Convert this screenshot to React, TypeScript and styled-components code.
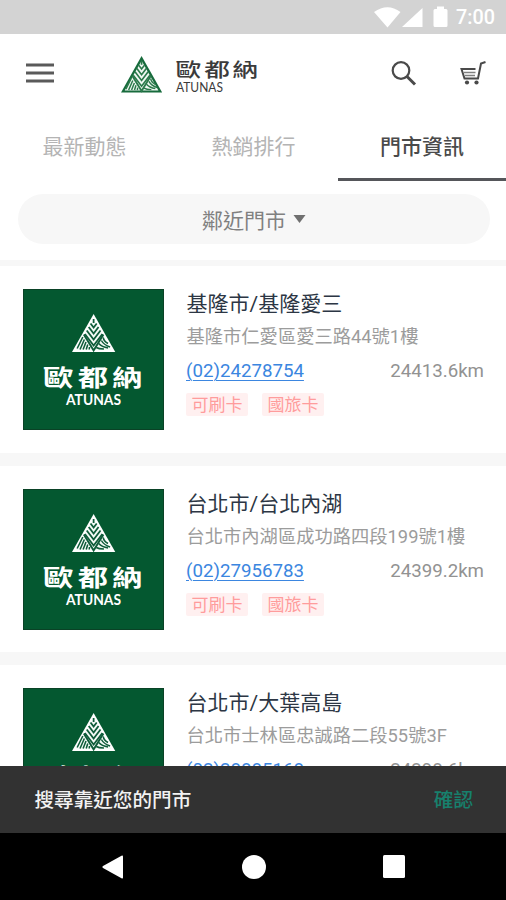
import React from 'react';
import styled, { createGlobalStyle } from 'styled-components';

const GlobalStyle = createGlobalStyle`
  * { box-sizing: border-box; }
  body { margin: 0; background: #fff; font-family: Roboto, "Noto Sans CJK TC", sans-serif; }
  button { border: 0; padding: 0; background: none; font: inherit; color: inherit; }
  svg { display: block; flex: none; }
`;

const Screen = styled.div`
  width: 506px;
  height: 900px;
  display: flex;
  flex-direction: column;
  overflow: hidden;
  background: #fff;
`;

const StatusBar = styled.div`
  height: 34px;
  flex: none;
  display: flex;
  align-items: center;
  justify-content: flex-end;
  padding-right: 11px;
  background: #d3d3d3;
  color: #fff;
`;

const Clock = styled.span`
  margin-left: 8px;
  width: 39px;
  font-size: 19.8px;
  font-weight: 500;
  line-height: 34px;
  padding-top: 2px;
  white-space: nowrap;
`;

const Header = styled.header`
  height: 78px;
  flex: none;
  display: flex;
  align-items: center;
  padding: 0 19px 0 25px;
`;

const IconButton = styled.button<{ $gap?: number }>`
  display: flex;
  margin-left: ${(p) => p.$gap ?? 0}px;
`;

const LogoBox = styled.div`
  flex: 1;
  padding: 1px 0 0 62px;
`;

const Tabs = styled.nav`
  height: 69px;
  flex: none;
  display: grid;
  grid-template-columns: 169px 169px 168px;
`;

const Tab = styled.button<{ $active?: boolean }>`
  height: 69px;
  padding-top: 5px;
  border-bottom: 3px solid ${(p) => (p.$active ? '#55565a' : 'transparent')};
  color: ${(p) => (p.$active ? '#4a4a4a' : '#b4b4b4')};
  font-size: 21px;
  font-weight: ${(p) => (p.$active ? 500 : 400)};
  line-height: 61px;
`;

const FilterBar = styled.div`
  height: 79px;
  flex: none;
  padding: 13px 16px 0 18px;
`;

const FilterPill = styled.button`
  width: 100%;
  height: 50px;
  border-radius: 25px;
  background: #f7f7f7;
  color: #808080;
  font-size: 21px;
  display: flex;
  align-items: center;
  justify-content: center;
  gap: 7px;
`;

const List = styled.main`
  flex: 1;
  min-height: 0;
  overflow: hidden;
  border-top: 6px solid #f7f7f7;
`;

const Card = styled.article`
  height: 199.5px;
  display: flex;
  padding: 23px 22px 0 23px;
  border-bottom: 13.5px solid #f7f7f7;
`;

const Thumb = styled.div`
  width: 141px;
  height: 141px;
  flex: none;
  background: #045830;
  border: 1px solid #0a4226;
`;

const Info = styled.div`
  flex: 1;
  min-width: 0;
  padding-left: 22.5px;
`;

const Name = styled.h2`
  margin: 0;
  font-size: 21px;
  font-weight: 400;
  line-height: 30px;
  color: #2c3644;
  white-space: nowrap;
`;

const Address = styled.p`
  margin: 0;
  padding-top: 2px;
  font-size: 18.3px;
  line-height: 32px;
  color: #9c9c9c;
  white-space: nowrap;
`;

const ContactRow = styled.div`
  display: flex;
  justify-content: space-between;
  padding-top: 1px;
  font-size: 18.7px;
  line-height: 34px;
  color: #929292;
`;

const Phone = styled.a`
  margin-left: -0.5px;
  color: #3b86e0;
  text-decoration: underline;
  text-decoration-thickness: 1px;
  text-underline-offset: 3px;
`;

const TagRow = styled.div`
  display: flex;
  gap: 14px;
  padding-top: 5px;
  margin-left: -0.5px;
`;

const Tag = styled.span`
  width: 62px;
  height: 23px;
  border-radius: 2px;
  background: #fff0f0;
  color: #ff9c9c;
  font-size: 17px;
  line-height: 25px;
  text-align: center;
`;

const Snackbar = styled.div`
  height: 67px;
  flex: none;
  display: flex;
  align-items: center;
  justify-content: space-between;
  padding: 0 33px 2px 34.5px;
  background: #323232;
  color: #f2f2f2;
  font-size: 19.6px;
  font-weight: 500;
`;

const Confirm = styled.button`
  color: #17806d;
`;

const NavBar = styled.div`
  height: 67px;
  flex: none;
  display: flex;
  align-items: center;
  justify-content: space-between;
  padding: 0 101px;
  background: #000;
`;

/* Striped mountain mark, drawn in a 42 x 38 box. */
const Mark = ({ frame, field, line }: { frame: string; field: string; line: string }) => (
  <>
    <path d="M21 0 42 38H0Z" fill={frame} />
    <path d="M21 5 38.200 36H3.800Z" fill={field} />
    <g stroke={line} fill="none" strokeWidth="1.700">
      <path d="M11.500 20.500 21 36.500 30.500 20.500" strokeWidth="1.900" />
      <path d="M21 5v4M18 9.500 21 13.500 24 9.500M16.200 13 21 19.500 25.800 13M14.300 16.500 21 25.500 27.700 16.500M12.500 20 21 31.500 29.500 20" />
      <path d="M10.500 23 5 34.500M12 25.500 7.800 35.500M13.600 28 10.800 35.500M15.300 30.500 13.800 35.500M17 33 16.700 35.500" strokeWidth="1.500" />
      <path d="M30.300 23.500Q31 27.500 35 29.500M28.500 26.500Q31 31 37 33M26 29.500Q29 33 35 34M23.500 33.500Q26 35 31 35" strokeWidth="1.500" />
    </g>
  </>
);

const cjk = '"Noto Sans CJK TC", sans-serif';

const HeaderLogo = () => (
  <svg width="142" height="42" viewBox="0 0 142 42">
    <g transform="translate(5 3) scale(.98 .96)">
      <Mark frame="#176b3c" field="#f1f8f3" line="#2b7a4b" />
    </g>
    <g fill="#3b3b3b">
      <text transform="translate(59.500 23.500) scale(1.220 .92)" x="0 23.500 46.800" y="0" fontFamily={cjk} fontSize="21" fontWeight="500">歐都納</text>
      <text x="60" y="38.500" fontFamily="Lato, sans-serif" fontSize="12.500" textLength="47" lengthAdjust="spacingAndGlyphs">ATUNAS</text>
    </g>
  </svg>
);

const ThumbLogo = () => (
  <svg width="139" height="139" viewBox="1 1 139 139">
    <g transform="translate(49 25) scale(1.030 1)">
      <Mark frame="#fff" field="#f4faf6" line="#0f5c3a" />
    </g>
    <g fill="#fff">
      <text transform="translate(20 97) scale(1.260 .97)" x="0 27.500 55" y="0" fontFamily={cjk} fontSize="24" fontWeight="700">歐都納</text>
      <text x="43" y="115.500" fontFamily="Lato, sans-serif" fontSize="15.500" fontWeight="700" textLength="55" lengthAdjust="spacingAndGlyphs">ATUNAS</text>
    </g>
  </svg>
);

const stores = [
  { name: '基隆市/基隆愛三', address: '基隆市仁愛區愛三路44號1樓', phone: '(02)24278754', distance: '24413.6km' },
  { name: '台北市/台北內湖', address: '台北市內湖區成功路四段199號1樓', phone: '(02)27956783', distance: '24399.2km' },
  { name: '台北市/大葉高島', address: '台北市士林區忠誠路二段55號3F', phone: '(02)28885168', distance: '24398.6km' },
];

export default function App() {
  return (
    <Screen>
      <GlobalStyle />
      <StatusBar>
        <svg width="74" height="34" viewBox="374 0 74 34" fill="#fff">
          <path d="M374 12Q387.500 2.500 400.500 12L387.500 27.500Z" />
          <path d="M422.500 8V27H402Z" />
          <path d="M437 6.500h7V9h2q1.500 0 1.500 1.500v15q0 1.500-1.500 1.500h-11q-1.500 0-1.500-1.500v-15Q433.500 9 435 9h2Z" />
        </svg>
        <Clock>7:00</Clock>
      </StatusBar>
      <Header>
        <IconButton aria-label="menu">
          <svg width="29" height="24" viewBox="0 0 29 24" stroke="#5a5a5a" strokeWidth="2.800">
            <path d="M1 4h28M1 12h28M1 20h28" />
          </svg>
        </IconButton>
        <LogoBox><HeaderLogo /></LogoBox>
        <IconButton aria-label="search">
          <svg width="26" height="26" viewBox="0 0 26 26" fill="none" stroke="#4a4a4a">
            <circle cx="10" cy="10.500" r="8.300" strokeWidth="2.200" />
            <path d="M16 16.500 24 24.500" strokeWidth="3" />
          </svg>
        </IconButton>
        <IconButton aria-label="cart" $gap={42}>
          <svg width="28" height="26" viewBox="0 0 28 26" fill="none" stroke="#4a4a4a" strokeWidth="2">
            <path d="M26.500 2 22 3.500 19 18.500H5.500L2.500 9H16.500" />
            <path d="M5 12.500h11.500M6 15.500h10" strokeWidth="1.400" stroke="#808080" />
            <g fill="#4a4a4a" stroke="none"><circle cx="8" cy="22.500" r="2.100" /><circle cx="17.500" cy="22.500" r="2.100" /></g>
          </svg>
        </IconButton>
      </Header>
      <Tabs>
        <Tab>最新動態</Tab>
        <Tab>熱銷排行</Tab>
        <Tab $active>門市資訊</Tab>
      </Tabs>
      <FilterBar>
        <FilterPill>
          鄰近門市
          <svg width="13" height="10" viewBox="0 0 13 10" fill="#707070"><path d="M.5 1h12L6.500 9Z" /></svg>
        </FilterPill>
      </FilterBar>
      <List>
        {stores.map((s) => (
          <Card key={s.name}>
            <Thumb><ThumbLogo /></Thumb>
            <Info>
              <Name>{s.name}</Name>
              <Address>{s.address}</Address>
              <ContactRow>
                <Phone>{s.phone}</Phone>
                <span>{s.distance}</span>
              </ContactRow>
              <TagRow>
                <Tag>可刷卡</Tag>
                <Tag>國旅卡</Tag>
              </TagRow>
            </Info>
          </Card>
        ))}
      </List>
      <Snackbar>
        <span>搜尋靠近您的門市</span>
        <Confirm>確認</Confirm>
      </Snackbar>
      <NavBar>
        <svg width="23" height="24" viewBox="0 0 23 24" fill="#fff"><path d="M20.500.7Q22 0 22 1.500v21Q22 24 20.500 23.300L2 13Q.500 12 2 11Z" /></svg>
        <svg width="24" height="24" viewBox="0 0 24 24" fill="#fff"><circle cx="12" cy="12" r="12" /></svg>
        <svg width="22" height="23" viewBox="0 0 22 23" fill="#fff"><rect width="22" height="23" rx="1.500" /></svg>
      </NavBar>
    </Screen>
  );
}
